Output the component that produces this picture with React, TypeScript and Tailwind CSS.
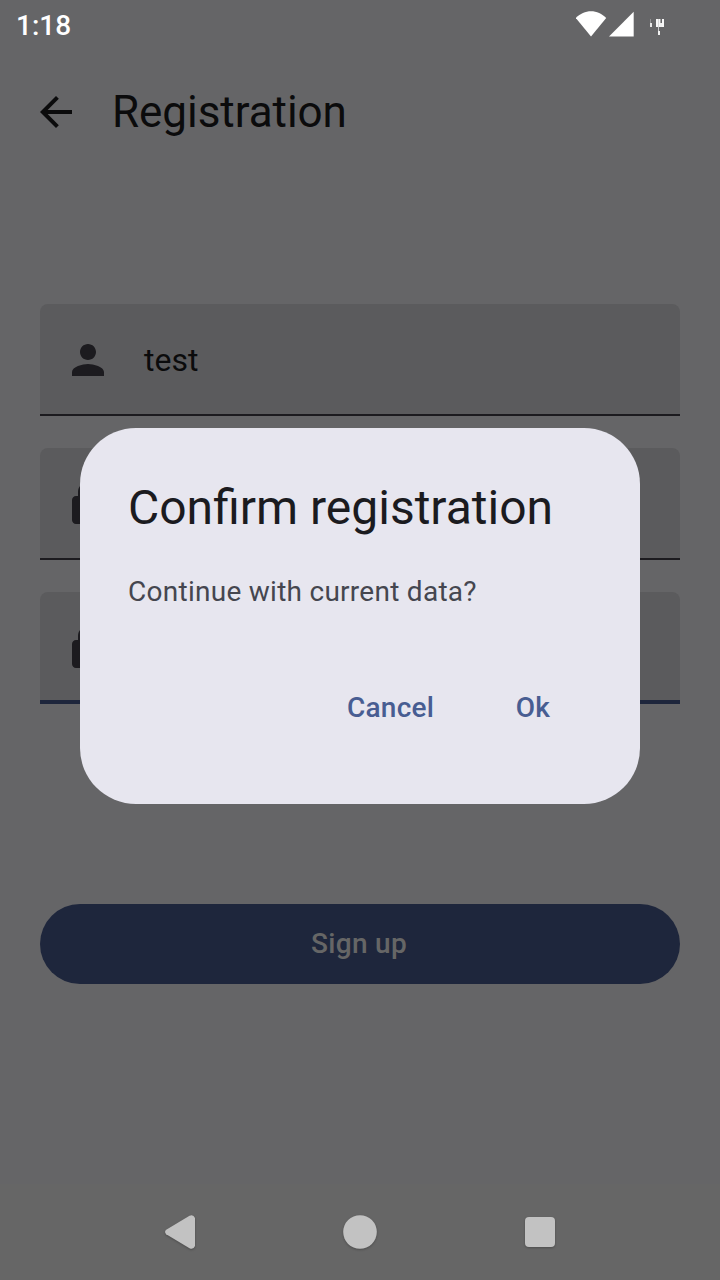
import type { ReactNode } from 'react';

function Icon({ d }: { d: string }) {
  return (
    <svg viewBox="0 0 24 24" className="size-12 shrink-0" fill="currentColor">
      <path d={d} />
    </svg>
  );
}

const PERSON =
  'M12 12c2.21 0 4-1.79 4-4s-1.79-4-4-4-4 1.79-4 4 1.79 4 4 4zm0 2c-2.67 0-8 1.34-8 4v2h16v-2c0-2.66-5.33-4-8-4z';
const LOCK =
  'M18 8h-1V6c0-2.76-2.24-5-5-5S7 3.24 7 6v2H6c-1.1 0-2 .9-2 2v10c0 1.1.9 2 2 2h12c1.1 0 2-.9 2-2V10c0-1.1-.9-2-2-2zm-6 9c-1.1 0-2-.9-2-2s.9-2 2-2 2 .9 2 2-.9 2-2 2zm3.1-9H8.9V6c0-1.71 1.39-3.1 3.1-3.1 1.71 0 3.1 1.39 3.1 3.1v2z';
const BACK = 'M20 11H7.83l5.59-5.59L12 4l-8 8 8 8 1.41-1.41L7.83 13H20v-2z';

function Field({ icon, focused, children }: { icon: string; focused?: boolean; children?: ReactNode }) {
  return (
    <div
      className={
        'flex h-28 items-center gap-8 rounded-t-lg bg-[#5b5b5d] px-6 text-[#1c1b1f] ' +
        (focused ? 'border-b-4 border-[#1e263c] pt-1' : 'border-b-2 border-[#1c1b1f] pt-0.5')
      }
    >
      <Icon d={icon} />
      <span className="text-[32px] leading-[48px] text-[#0b0b0c]">{children}</span>
    </div>
  );
}

function StatusBar() {
  return (
    <header className="flex h-12 items-center justify-between pl-4 text-white">
      <span className="pt-1 text-[28px] leading-8 font-medium">1:18</span>
      <svg width="144" height="48" viewBox="576 0 144 48" fill="currentColor">
        <path d="M591 36.500 575.800 18C580 13.800 585.300 11.300 591 11.300S602 13.800 606.200 18Z" />
        <path d="M609 36.500H633.700V11.800Z" />
        <g shapeRendering="crispEdges">
          <path d="M650 19h1v4h-1z" opacity=".3" />
          <path d="M650 23h2v4h-2z" opacity=".85" />
          <path d="M656 19h2v8h-2zM659 19h1v8h-1zM662 19h2v8h-2z" opacity=".95" />
          <path d="M658 19h1v8h-1z" opacity=".75" />
          <path d="M660 19h1v4h-1z" opacity=".4" />
          <path d="M660 23h2v4h-2z" opacity=".9" />
          <path d="M658 27h1v4h-1z" opacity=".65" />
          <path d="M658 31h2v4h-2z" opacity=".9" />
        </g>
      </svg>
    </header>
  );
}

function NavBar() {
  return (
    <nav className="flex h-24 items-center justify-center gap-[84px] bg-[#666666] text-[#c2c2c2]">
      <svg className="size-24 drop-shadow-[0_1px_1px_rgba(0,0,0,0.25)]" viewBox="0 0 96 96" fill="currentColor">
        <path d="M34.200 45.800 57.500 31.800Q61.200 29.900 63 34V62Q61.200 66.100 57.500 64.200L34.200 50.200Q31.900 48 34.200 45.800Z" />
      </svg>
      <svg className="size-24 drop-shadow-[0_1px_1px_rgba(0,0,0,0.25)]" viewBox="0 0 96 96" fill="currentColor">
        <circle cx="48" cy="48" r="16.800" />
      </svg>
      <svg className="size-24 drop-shadow-[0_1px_1px_rgba(0,0,0,0.25)]" viewBox="0 0 96 96" fill="currentColor">
        <rect x="33" y="33" width="30" height="30" rx="4" />
      </svg>
    </nav>
  );
}

function ConfirmDialog() {
  return (
    <div className="absolute inset-x-0 top-[428px] flex justify-center">
      <section role="dialog" className="flex h-[376px] w-[560px] flex-col rounded-[56px] bg-[#e7e6ef] px-12 pt-12">
        <h2 className="text-[48px] leading-[64px] text-[#1b1b1f]">Confirm registration</h2>
        <p className="mt-8 text-[28px] leading-10 tracking-[0.27px] text-[#45464f]">Continue with current data?</p>
        <div className="mt-14 flex justify-end gap-4 text-[28px] font-medium tracking-[0.2px] text-[#485d92]">
          <button className="h-20 px-6">Cancel</button>
          <button className="h-20 w-[118px]">Ok</button>
        </div>
      </section>
    </div>
  );
}

export default function App() {
  return (
    <div className="relative flex h-[1280px] w-[720px] flex-col overflow-hidden bg-[#656567] font-['Roboto',sans-serif]">
      <StatusBar />
      <div className="flex h-32 items-center gap-8 pl-8 text-[#0b0b0c]">
        <Icon d={BACK} />
        <h1 className="text-[44px] leading-[56px] tracking-[-0.05px]">Registration</h1>
      </div>
      <main className="flex flex-1 flex-col px-10 pt-32">
        <div className="flex flex-col gap-8">
          <Field icon={PERSON}>test</Field>
          <Field icon={LOCK} />
          <Field icon={LOCK} focused />
        </div>
        <button className="mt-[200px] h-20 rounded-full bg-[#1e263c] pr-[2px] text-[28px] font-medium tracking-[0.3px] text-[#666666]">
          Sign up
        </button>
      </main>
      <NavBar />
      <ConfirmDialog />
    </div>
  );
}
